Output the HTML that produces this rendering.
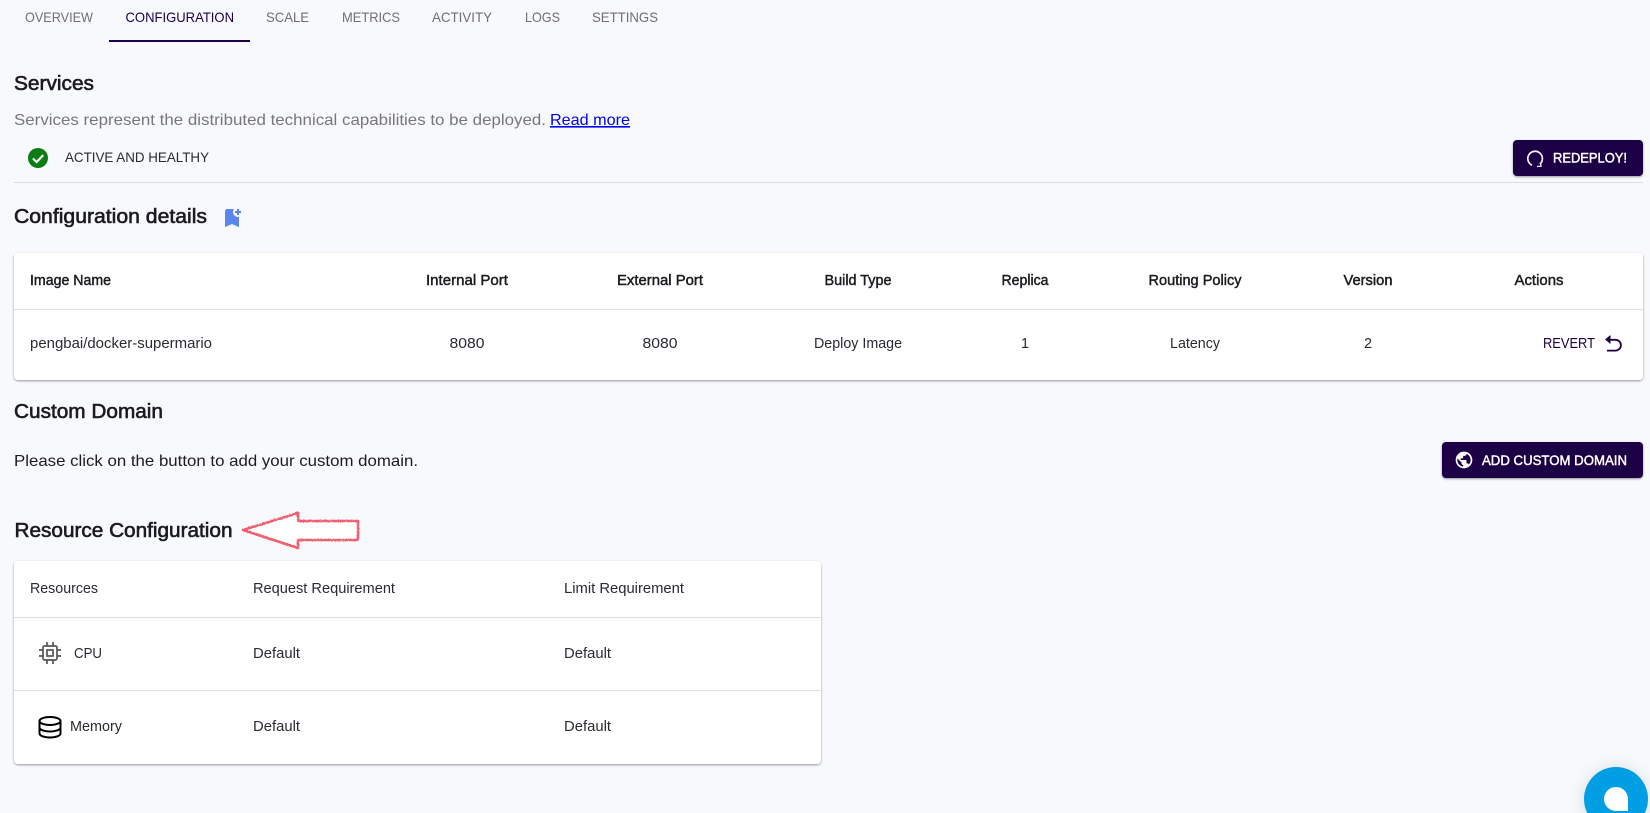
<!DOCTYPE html>
<html lang="en"><head><meta charset="utf-8"><title>Services - Configuration</title>
<style>
html,body{margin:0;padding:0;width:1650px;height:813px;overflow:hidden;background:#f8f9fd}
svg{display:block}
text{font-family:"Liberation Sans",sans-serif;font-size:14.5px;fill:#2a2a33}
.tab{font-size:14px;fill:#6f6f72}
.h{font-size:20px;fill:#1b1b20;stroke:#1b1b20;stroke-width:.6px}
.th{font-size:14.5px;fill:#1b1b20;stroke:#1b1b20;stroke-width:.45px}
.c{text-anchor:middle}
.btn{font-size:14px;fill:#fff;stroke:#fff;stroke-width:.45px}
</style></head><body>
<svg width="1650" height="813" viewBox="0 0 1650 813" xmlns="http://www.w3.org/2000/svg">
<defs>
<filter id="s" x="-5%" y="-10%" width="110%" height="125%"><feDropShadow dx="0" dy="1" stdDeviation="1" flood-color="#000" flood-opacity=".4"/></filter>
<filter id="f" x="-50%" y="-50%" width="200%" height="200%"><feDropShadow dx="0" dy="1" stdDeviation="8" flood-color="#000" flood-opacity=".12"/></filter>
<filter id="j" x="-10%" y="-20%" width="120%" height="140%"><feTurbulence type="fractalNoise" baseFrequency=".6" numOctaves="2" seed="4" result="n"/><feDisplacementMap in="SourceGraphic" in2="n" scale="2.2"/></filter>
</defs>
<rect width="1650" height="813" fill="#f8f9fd"/>

<text class="tab" x="25" y="22" textLength="68" lengthAdjust="spacingAndGlyphs">OVERVIEW</text>
<text class="tab" x="125.5" y="22" textLength="108.5" lengthAdjust="spacingAndGlyphs" style="fill:#1c0045">CONFIGURATION</text>
<text class="tab" x="266" y="22" textLength="43" lengthAdjust="spacingAndGlyphs">SCALE</text>
<text class="tab" x="342" y="22" textLength="58" lengthAdjust="spacingAndGlyphs">METRICS</text>
<text class="tab" x="432" y="22" textLength="60" lengthAdjust="spacingAndGlyphs">ACTIVITY</text>
<text class="tab" x="525" y="22" textLength="35" lengthAdjust="spacingAndGlyphs">LOGS</text>
<text class="tab" x="592" y="22" textLength="66" lengthAdjust="spacingAndGlyphs">SETTINGS</text>
<rect x="109" y="40" width="141" height="2" fill="#1c0045"/>

<text class="h" x="14" y="90" textLength="80" lengthAdjust="spacingAndGlyphs">Services</text>
<text x="14" y="125" textLength="532" lengthAdjust="spacingAndGlyphs" style="font-size:16px;fill:#77777a">Services represent the distributed technical capabilities to be deployed.</text>
<text x="550" y="125" textLength="80" lengthAdjust="spacingAndGlyphs" style="font-size:16px;fill:#0000ee" text-decoration="underline">Read more</text>

<circle cx="38" cy="158" r="10" fill="#0a7d12"/>
<path d="M33 158.500l3.600 3.600 6.600-7" fill="none" stroke="#fff" stroke-width="2.200"/>
<text x="65" y="162" textLength="144" lengthAdjust="spacingAndGlyphs" style="font-size:14px;fill:#2a2a33">ACTIVE AND HEALTHY</text>

<rect x="1513" y="140" width="130" height="36" rx="4" fill="#1c0045" filter="url(#s)"/>
<path d="M1532 165.200A7.300 7.300 0 1 1 1540 164" fill="none" stroke="#f4f2fa" stroke-width="1.700"/>
<path d="M1537 166.500l4-.2-.6-3.600" fill="none" stroke="#f4f2fa" stroke-width="1.300"/>
<text class="btn" x="1553" y="162.500" textLength="74" lengthAdjust="spacingAndGlyphs">REDEPLOY!</text>

<rect x="14" y="182" width="1629" height="1" fill="#dcdde2"/>

<text class="h" x="14" y="223" textLength="193" lengthAdjust="spacingAndGlyphs">Configuration details</text>
<path transform="translate(220 206)" fill="#5b85ef" d="M21 7h-2v2h-2V7h-2V5h2V3h2v2h2v2zm-2 14-7-3-7 3V5c0-1.100.900-2 2-2h7c-.640.840-1 1.870-1 3 0 2.760 2.240 5 5 5 .340 0 .680-.030 1-.100V21z"/>

<rect x="14" y="253" width="1629" height="127" rx="4" fill="#fff" filter="url(#s)"/>
<rect x="14" y="309" width="1629" height="1" fill="#e0e0e0"/>
<text class="th" x="30" y="285" textLength="81" lengthAdjust="spacingAndGlyphs">Image Name</text>
<text class="th c" x="467" y="285" textLength="82" lengthAdjust="spacingAndGlyphs">Internal Port</text>
<text class="th c" x="660" y="285" textLength="86" lengthAdjust="spacingAndGlyphs">External Port</text>
<text class="th c" x="858" y="285" textLength="67" lengthAdjust="spacingAndGlyphs">Build Type</text>
<text class="th c" x="1025" y="285" textLength="47" lengthAdjust="spacingAndGlyphs">Replica</text>
<text class="th c" x="1195" y="285" textLength="93" lengthAdjust="spacingAndGlyphs">Routing Policy</text>
<text class="th c" x="1368" y="285" textLength="49" lengthAdjust="spacingAndGlyphs">Version</text>
<text class="th c" x="1539" y="285" textLength="49" lengthAdjust="spacingAndGlyphs">Actions</text>

<text x="30" y="348" textLength="182" lengthAdjust="spacingAndGlyphs">pengbai/docker-supermario</text>
<text class="c" x="467" y="348" textLength="35" lengthAdjust="spacingAndGlyphs">8080</text>
<text class="c" x="660" y="348" textLength="35" lengthAdjust="spacingAndGlyphs">8080</text>
<text class="c" x="858" y="348" textLength="88" lengthAdjust="spacingAndGlyphs">Deploy Image</text>
<text class="c" x="1025" y="348">1</text>
<text class="c" x="1195" y="348" textLength="50" lengthAdjust="spacingAndGlyphs">Latency</text>
<text class="c" x="1368" y="348">2</text>
<text x="1543" y="348" textLength="52" lengthAdjust="spacingAndGlyphs" style="font-size:14.500px;fill:#1c0045">REVERT</text>
<path d="M1605 339.500 1610.500 335v9z" fill="#1c0045"/>
<path d="M1609 339.800h6.500a5.400 5.400 0 0 1 0 10.800h-8.500" fill="none" stroke="#1c0045" stroke-width="1.800"/>

<text class="h" x="14" y="418" textLength="149" lengthAdjust="spacingAndGlyphs">Custom Domain</text>
<text x="14" y="466" textLength="404" lengthAdjust="spacingAndGlyphs" style="font-size:16px;fill:#1b1b20">Please click on the button to add your custom domain.</text>

<rect x="1442" y="442" width="201" height="36" rx="4" fill="#1c0045" filter="url(#s)"/>
<path transform="translate(1454 450) scale(.8333)" fill="#fff" d="M12 2C6.480 2 2 6.480 2 12s4.480 10 10 10 10-4.480 10-10S17.520 2 12 2zm-1 17.930c-3.950-.490-7-3.850-7-7.930 0-.620.080-1.210.210-1.790L9 15v1c0 1.100.900 2 2 2v1.930zm6.900-2.540c-.260-.810-1-1.390-1.900-1.390h-1v-3c0-.550-.450-1-1-1H8v-2h2c.550 0 1-.450 1-1V7h2c1.100 0 2-.900 2-2v-.410c2.930 1.190 5 4.060 5 7.410 0 2.080-.800 3.970-2.100 5.390z"/>
<text class="btn" x="1482" y="465" textLength="145" lengthAdjust="spacingAndGlyphs">ADD CUSTOM DOMAIN</text>

<text class="h" x="14.500" y="537" textLength="218" lengthAdjust="spacingAndGlyphs">Resource Configuration</text>
<g filter="url(#j)"><path d="M243 530 298 513 298 521 358 521 358 540 298 540 298 548Z" fill="#ffffff" stroke="#ee5f70" stroke-width="2.600" stroke-linejoin="round"/></g>

<rect x="14" y="561" width="807" height="203" rx="4" fill="#fff" filter="url(#s)"/>
<rect x="14" y="617" width="807" height="1" fill="#e0e0e0"/>
<rect x="14" y="690" width="807" height="1" fill="#e0e0e0"/>
<text x="30" y="593" textLength="68" lengthAdjust="spacingAndGlyphs">Resources</text>
<text x="253" y="593" textLength="142" lengthAdjust="spacingAndGlyphs">Request Requirement</text>
<text x="564" y="593" textLength="120" lengthAdjust="spacingAndGlyphs">Limit Requirement</text>

<g transform="translate(38 641)" fill="none" stroke="#555" stroke-width="1.700">
<rect x="5" y="5" width="14" height="14" rx="1.500"/><rect x="9" y="9" width="6" height="6"/>
<path d="M1 9h4M1 15h4M19 9h4M19 15h4M9 1v4M15 1v4M9 19v4M15 19v4"/></g>
<text x="74" y="658" textLength="28" lengthAdjust="spacingAndGlyphs">CPU</text>
<text x="253" y="658" textLength="47" lengthAdjust="spacingAndGlyphs">Default</text>
<text x="564" y="658" textLength="47" lengthAdjust="spacingAndGlyphs">Default</text>

<g fill="none" stroke="#000" stroke-width="2">
<ellipse cx="50" cy="721" rx="10.500" ry="4"/>
<path d="M39.500 721v12.500c0 2.200 4.700 4 10.500 4s10.500-1.800 10.500-4V721M39.500 727.500c0 2.200 4.700 4 10.500 4s10.500-1.800 10.500-4"/></g>
<text x="70" y="731" textLength="52" lengthAdjust="spacingAndGlyphs">Memory</text>
<text x="253" y="731" textLength="47" lengthAdjust="spacingAndGlyphs">Default</text>
<text x="564" y="731" textLength="47" lengthAdjust="spacingAndGlyphs">Default</text>

<circle cx="1616" cy="799" r="32" fill="#009fe3" filter="url(#f)"/>
<path d="M1616 787a12 12 0 0 1 12 12v12h-12a12 12 0 0 1 0-24z" fill="#fff"/>
</svg>
</body></html>
